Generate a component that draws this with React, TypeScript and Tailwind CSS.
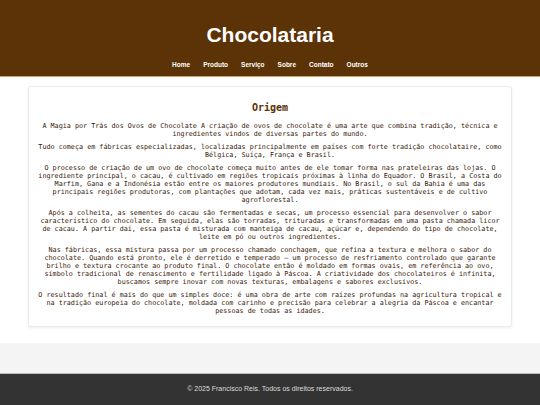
import React from "react"

const links = ["Home", "Produto", "Serviço", "Sobre", "Contato", "Outros"]

const paragraphs = [
  "A Magia por Trás dos Ovos de Chocolate A criação de ovos de chocolate é uma arte que combina tradição, técnica e ingredientes vindos de diversas partes do mundo.",
  "Tudo começa em fábricas especializadas, localizadas principalmente em países com forte tradição chocolataire, como Bélgica, Suíça, França e Brasil.",
  "O processo de criação de um ovo de chocolate começa muito antes de ele tomar forma nas prateleiras das lojas. O ingrediente principal, o cacau, é cultivado em regiões tropicais próximas à linha do Equador. O Brasil, a Costa do Marfim, Gana e a Indonésia estão entre os maiores produtores mundiais. No Brasil, o sul da Bahia é uma das principais regiões produtoras, com plantações que adotam, cada vez mais, práticas sustentáveis e de cultivo agroflorestal.",
  "Após a colheita, as sementes do cacau são fermentadas e secas, um processo essencial para desenvolver o sabor característico do chocolate. Em seguida, elas são torradas, trituradas e transformadas em uma pasta chamada licor de cacau. A partir daí, essa pasta é misturada com manteiga de cacau, açúcar e, dependendo do tipo de chocolate, leite em pó ou outros ingredientes.",
  "Nas fábricas, essa mistura passa por um processo chamado conchagem, que refina a textura e melhora o sabor do chocolate. Quando está pronto, ele é derretido e temperado — um processo de resfriamento controlado que garante brilho e textura crocante ao produto final. O chocolate então é moldado em formas ovais, em referência ao ovo, símbolo tradicional de renascimento e fertilidade ligado à Páscoa. A criatividade dos chocolateiros é infinita, buscamos sempre inovar com novas texturas, embalagens e sabores exclusivos.",
  "O resultado final é mais do que um simples doce: é uma obra de arte com raízes profundas na agricultura tropical e na tradição europeia do chocolate, moldada com carinho e precisão para celebrar a alegria da Páscoa e encantar pessoas de todas as idades.",
]

function App() {
  return (
    <div className="min-h-[405px] flex flex-col bg-[#f4f4f4] font-['Liberation_Sans',Arial,sans-serif]">
      <header className="h-[77px] bg-[#5c3306] border-b border-[#c9a46a] flex flex-col items-center text-white">
        <h1 className="mt-[23px] text-[21px] leading-[24px] font-bold">Chocolataria</h1>
        <nav className="mt-[14px] flex gap-[13px] text-[6.5px] leading-[8px] font-bold">
          {links.map((l) => (
            <a key={l} href="#">{l}</a>
          ))}
        </nav>
      </header>

      <main className="bg-white pt-[9px] pb-[16px] px-[28px]">
        <section className="bg-white border border-[#ebebeb] rounded-[3px] shadow-[0_1px_3px_rgba(0,0,0,0.08)] px-[9px] pt-[14px] pb-[11px] text-center text-[#3a2108] font-['DejaVu_Sans_Mono',monospace]">
          <h2 className="text-[10px] leading-[14px] font-bold text-[#5c3306] mb-[7px]">Origem</h2>
          <div className="flex flex-col gap-[5px] text-[6.75px] leading-[8px]">
            {paragraphs.map((p, i) => (
              <p key={i}>{p}</p>
            ))}
          </div>
        </section>
      </main>

      <div className="h-[30px]" />

      <footer className="mt-auto h-[32px] bg-[#333] border-t border-[#bbb] flex items-center justify-center text-[#ddd] text-[7px]">
        © 2025 Francisco Reis. Todos os direitos reservados.
      </footer>
    </div>
  )
}

export default App
